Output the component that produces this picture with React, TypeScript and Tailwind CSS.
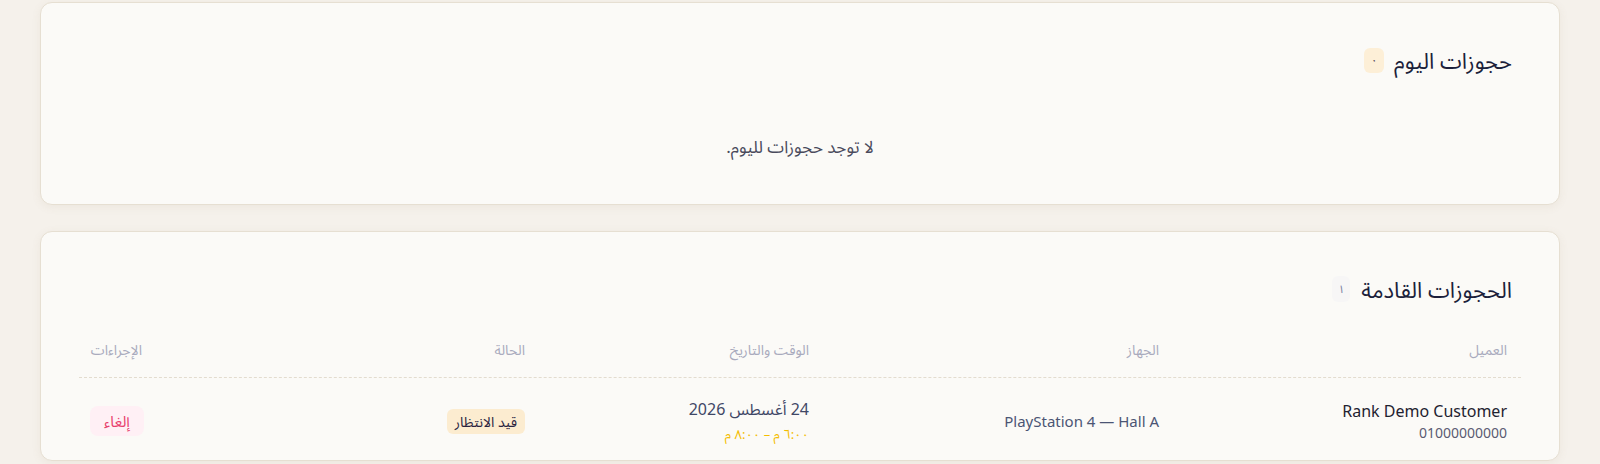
import React from "react";

const font = "font-['Noto_Sans','Noto_Sans_Arabic','DejaVu_Sans',sans-serif]";

export default function App() {
  return (
    <div dir="rtl" className={`min-h-[464px] w-full bg-[#f5f1eb] px-[40px] pt-[2px] ${font}`}>
      {/* Today's bookings */}
      <section className="rounded-xl border border-[#e6dfd2] bg-[#fbfaf7] px-[38px] pt-[41px] pb-[45px] shadow-[0_2px_10px_rgba(140,115,80,0.08)]">
        <div className="flex h-[32px] items-center gap-2.5 pr-[9px]">
          <h2 className="text-[22px] leading-[32px] text-[#1b1f3b]">حجوزات اليوم</h2>
          <span className="flex h-[25px] w-[20px] items-center justify-center rounded-md bg-[#fdefd7] text-[11px] text-[#2b2440]">٠</span>
        </div>
        <p className="mt-[59px] text-center text-[17px] leading-[24px] text-[#4a4a5c]">لا توجد حجوزات لليوم.</p>
      </section>

      {/* Upcoming bookings */}
      <section className="mt-[26px] rounded-xl border border-[#e6dfd2] bg-[#fbfaf7] px-[38px] pt-[41px] pb-0 shadow-[0_2px_10px_rgba(140,115,80,0.08)]">
        <div className="flex h-[32px] items-center gap-[11px] pr-[9px]">
          <h2 className="text-[22px] leading-[32px] text-[#1b1f3b]">الحجوزات القادمة</h2>
          <span className="flex h-[26px] w-[18px] items-center justify-center rounded-md bg-[#f7f6f6] text-[11px] text-[#7a80a0]">١</span>
        </div>

        <div className="mt-[23px]">
          <div className="grid grid-cols-[348px_350px_284px_383px_79px] border-b border-dashed border-[#e3dccf] text-[14px] leading-[20px] text-[#a9aabd]">
            <div className="px-[14px] pt-[12px] pb-[17px]">العميل</div>
            <div className="px-[14px] pt-[12px] pb-[17px]">الجهاز</div>
            <div className="px-[14px] pt-[12px] pb-[17px]">الوقت والتاريخ</div>
            <div className="px-[14px] pt-[12px] pb-[17px]">الحالة</div>
            <div className="px-[14px] pt-[12px] pb-[17px] whitespace-nowrap">الإجراءات</div>
          </div>

          <div className="grid grid-cols-[348px_350px_284px_383px_79px] items-center pt-[20px] pb-[16px]">
            <div className="px-[14px]">
              <div className="text-[16px] leading-[24px] text-[#1f2230]">Rank Demo Customer</div>
              <div className="text-[14px] leading-[20px] text-[#5a5b72]">01000000000</div>
            </div>
            <div className="px-[14px] text-[15px] leading-[22px] text-[#4b5574]">PlayStation 4 — Hall A</div>
            <div className="px-[14px]">
              <div className="text-[16px] leading-[22px] text-[#3f4766]">24 أغسطس 2026</div>
              <div className="mt-[4px] text-[13px] leading-[20px] text-[#f4bd00]">٦:٠٠ م – ٨:٠٠ م</div>
            </div>
            <div className="px-[14px]">
              <span className="inline-flex h-[25px] items-center rounded-md bg-[#fcecd0] px-[8px] text-[14px] text-[#2b2440] whitespace-nowrap">قيد الانتظار</span>
            </div>
            <div className="flex justify-start pr-[12px]">
              <button className="flex h-[30px] w-[54px] items-center justify-center rounded-lg bg-[#fff0f5] text-[15px] text-[#e8406d] whitespace-nowrap">إلغاء</button>
            </div>
          </div>
        </div>
      </section>
    </div>
  );
}
